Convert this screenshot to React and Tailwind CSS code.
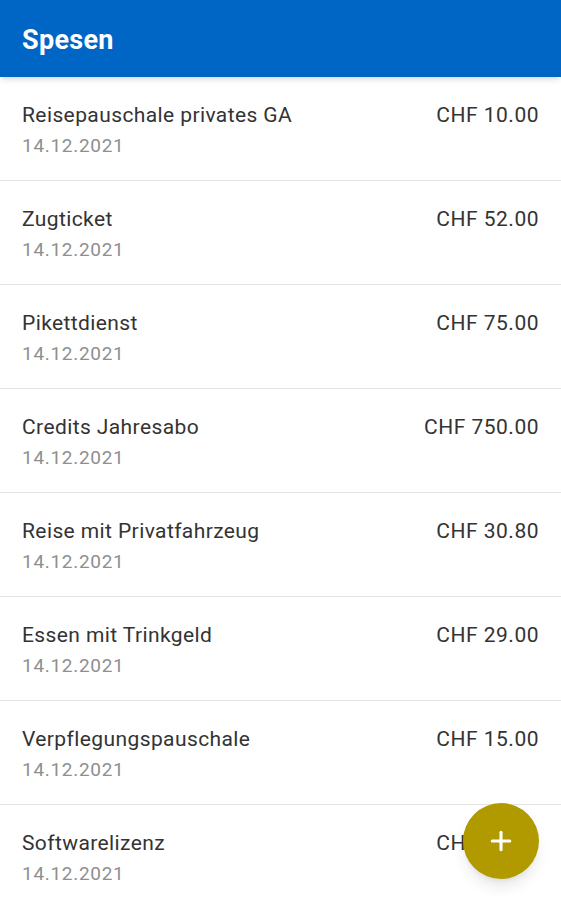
import React from 'react';
import { Plus } from 'lucide-react';

const expenses = [
  { title: "Reisepauschale privates GA", date: "14.12.2021", amount: "CHF 10.00" },
  { title: "Zugticket",                  date: "14.12.2021", amount: "CHF 52.00" },
  { title: "Pikettdienst",               date: "14.12.2021", amount: "CHF 75.00" },
  { title: "Credits Jahresabo",          date: "14.12.2021", amount: "CHF 750.00" },
  { title: "Reise mit Privatfahrzeug",   date: "14.12.2021", amount: "CHF 30.80" },
  { title: "Essen mit Trinkgeld",        date: "14.12.2021", amount: "CHF 29.00" },
  { title: "Verpflegungspauschale",      date: "14.12.2021", amount: "CHF 15.00" },
  { title: "Softwarelizenz",             date: "14.12.2021", amount: "CHF 12.00" },
];

export default function App() {
  return (
    <div className="relative h-[900px] overflow-hidden bg-white font-['Roboto',sans-serif]">

      {/* App bar */}
      <header className="h-[77px] bg-[#0066c6] flex items-center px-[22px] pt-[3px] shadow-md">
        <h1 className="text-white text-[27px] font-bold tracking-[0.3px]">Spesen</h1>
      </header>

      {/* List */}
      <ul>
        {expenses.map((e) => (
          <li key={e.title} className="h-[104px] border-b border-[#e2e2e2] px-[22px] pt-[24px] flex justify-between">
            <div>
              <p className="text-[21px] leading-[28px] tracking-[0.4px] text-[#333333]">{e.title}</p>
              <p className="text-[19px] leading-[33px] tracking-[0.7px] text-[#8f8f8f]">{e.date}</p>
            </div>
            <p className="text-[21px] leading-[28px] tracking-[0.5px] text-[#333333]">{e.amount}</p>
          </li>
        ))}
      </ul>

      {/* FAB */}
      <button className="absolute left-[463px] top-[803px] w-[76px] h-[76px] rounded-full bg-[#b09a00] flex items-center justify-center shadow-lg">
        <Plus size={30} strokeWidth={2.5} className="text-white" />
      </button>
    </div>
  );
}
